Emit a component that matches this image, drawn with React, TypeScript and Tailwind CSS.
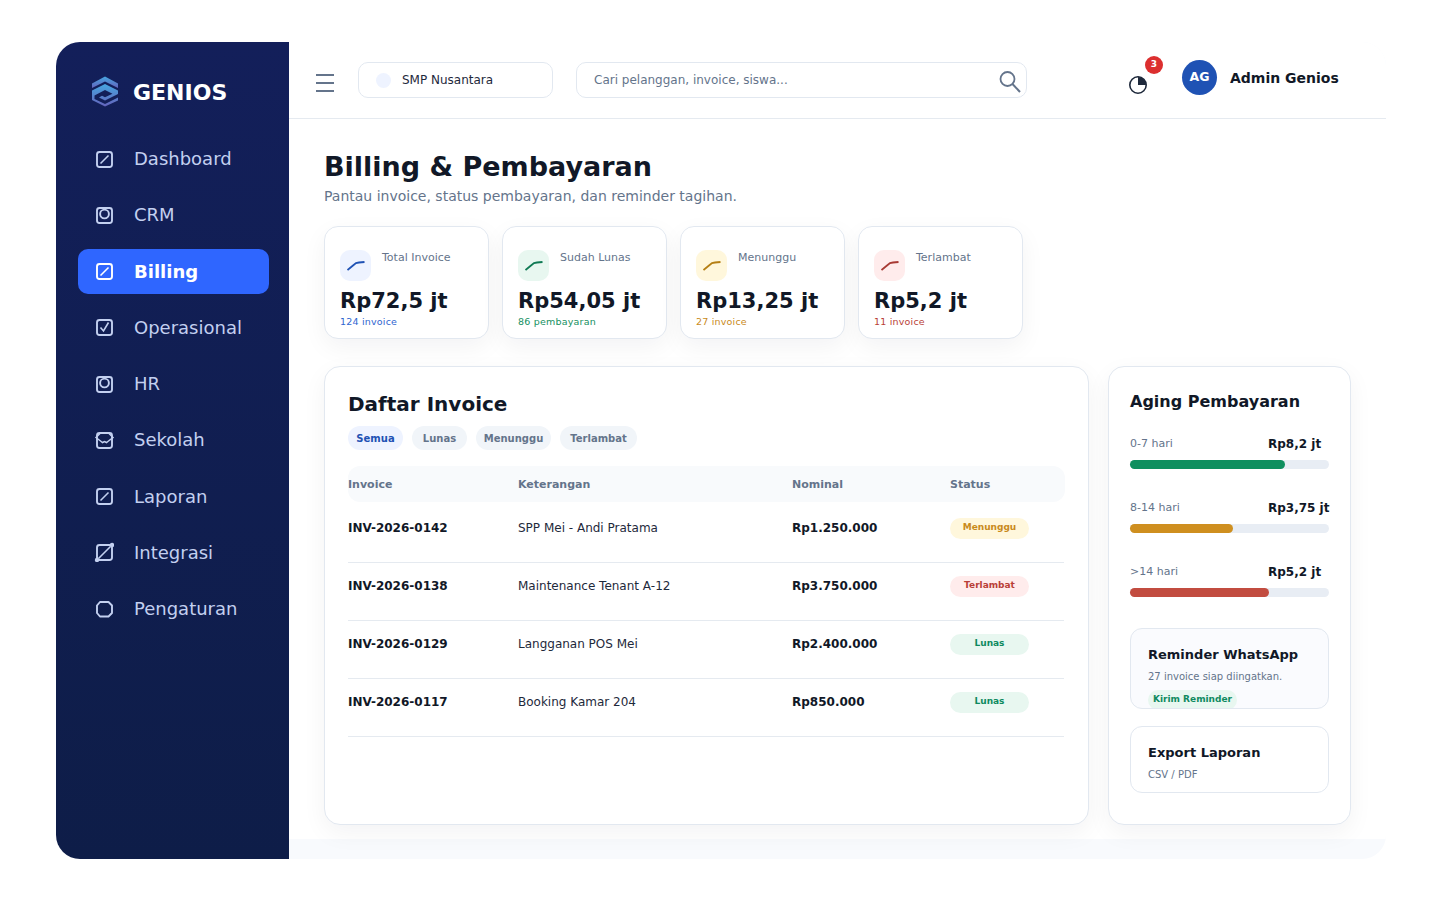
import type { ReactNode } from 'react'

type Tone = { label: string; value: string; sub: string; iconBg: string; stroke: string; subColor: string }

const NAV = [
  { label: 'Dashboard', icon: 'slash' },
  { label: 'CRM', icon: 'circle' },
  { label: 'Billing', icon: 'slash', active: true },
  { label: 'Operasional', icon: 'check' },
  { label: 'HR', icon: 'circle' },
  { label: 'Sekolah', icon: 'eye' },
  { label: 'Laporan', icon: 'slash' },
  { label: 'Integrasi', icon: 'link' },
  { label: 'Pengaturan', icon: 'gear' },
]

const STATS: Tone[] = [
  { label: 'Total Invoice', value: 'Rp72,5 jt', sub: '124 invoice', iconBg: 'bg-[#eef3ff]', stroke: '#1f52b4', subColor: 'text-[#2f66d0]' },
  { label: 'Sudah Lunas', value: 'Rp54,05 jt', sub: '86 pembayaran', iconBg: 'bg-[#e8f7f0]', stroke: '#0f7a54', subColor: 'text-[#14905f]' },
  { label: 'Menunggu', value: 'Rp13,25 jt', sub: '27 invoice', iconBg: 'bg-[#fff7dc]', stroke: '#b57f14', subColor: 'text-[#c98a1b]' },
  { label: 'Terlambat', value: 'Rp5,2 jt', sub: '11 invoice', iconBg: 'bg-[#ffecec]', stroke: '#a83a34', subColor: 'text-[#b93f38]' },
]

const ROWS = [
  { id: 'INV-2026-0142', desc: 'SPP Mei - Andi Pratama', amount: 'Rp1.250.000', status: 'Menunggu' },
  { id: 'INV-2026-0138', desc: 'Maintenance Tenant A-12', amount: 'Rp3.750.000', status: 'Terlambat' },
  { id: 'INV-2026-0129', desc: 'Langganan POS Mei', amount: 'Rp2.400.000', status: 'Lunas' },
  { id: 'INV-2026-0117', desc: 'Booking Kamar 204', amount: 'Rp850.000', status: 'Lunas' },
]

const STATUS_STYLE: Record<string, string> = {
  Menunggu: 'bg-[#fff7dc] text-[#c98a1b]',
  Terlambat: 'bg-[#ffecec] text-[#b93f38]',
  Lunas: 'bg-[#e8f7f0] text-[#0f8a5f]',
}

const AGING = [
  { label: '0-7 hari', value: 'Rp8,2 jt', width: '78%', color: 'bg-[#0f8f5f]' },
  { label: '8-14 hari', value: 'Rp3,75 jt', width: '52%', color: 'bg-[#cf8f1f]' },
  { label: '>14 hari', value: 'Rp5,2 jt', width: '70%', color: 'bg-[#c24c40]' },
]

function NavIcon({ kind }: { kind: string }) {
  return (
    <svg width="20" height="20" viewBox="0 0 20 20" fill="none" stroke="currentColor" strokeWidth="1.9" className="shrink-0">
      {kind === 'gear' ? (
        <path d="M6 3h8.5L18 6.5V14l-3.5 3.500H6L3 14V6.5z" strokeLinejoin="round" />
      ) : (
        <rect x="3" y="3" width="15" height="15" rx="2.5" />
      )}
      {kind === 'slash' && <path d="M6.5 14.5 14.5 6.5" strokeWidth="1.6" />}
      {kind === 'circle' && <circle cx="10.5" cy="9" r="4.4" />}
      {kind === 'check' && <path d="m6.5 10.500 3 3.500 5-8.500" strokeWidth="1.6" />}
      {kind === 'eye' && <path d="M2 7.500 6.500 3h8L19 7.500 14.500 11l-2 1.500-2-1-2 1-2-1.500z" strokeWidth="1.5" />}
      {kind === 'link' && (
        <>
          <path d="M4.5 16.500 16.500 4.500" strokeWidth="1.6" />
          <circle cx="3" cy="18" r="2.2" fill="currentColor" stroke="none" />
          <circle cx="18" cy="3" r="2.2" fill="currentColor" stroke="none" />
        </>
      )}
    </svg>
  )
}

function Card({ className, children }: { className: string; children: ReactNode }) {
  return (
    <div className={`bg-white border border-[#e2e8f0] shadow-[0_8px_24px_rgba(15,23,42,0.05)] ${className}`}>
      {children}
    </div>
  )
}

export default function App() {
  return (
    <div className="h-[900px] bg-white pt-[42px] pl-[56px] [font-family:'DejaVu_Sans',sans-serif]">
      <div className="flex h-[817px] w-[1330px] overflow-hidden rounded-[24px]">
        {/* Sidebar */}
        <aside className="w-[233px] shrink-0 bg-gradient-to-b from-[#131f5a] to-[#0e1d48] pl-[22px] pt-[34px]">
          <div className="flex h-[30px] items-center pl-[13px] pt-[1px]">
            <svg width="28" height="31" viewBox="0 0 28 31" fill="none">
              <defs>
                <linearGradient id="logo" x1="0" y1="0" x2="0" y2="1">
                  <stop offset="0" stopColor="#46a6e0" />
                  <stop offset="1" stopColor="#6463bc" />
                </linearGradient>
              </defs>
              <path d="M14 0.5 27 7.5v4.500L14 5.500 1 12V7.5z" fill="url(#logo)" />
              <path d="M14 8 27 14.500v3.500L14 24.500l-6-3 3-1.700 3 1.500 7.500-3.600L14 14 3.500 19.500v3.500L14 28l13-6.500v3L14 30.500 1 24V14.500z" fill="url(#logo)" />
            </svg>
            <span className="ml-[14px] mt-[3px] text-[22px] font-bold leading-none text-white">GENIOS</span>
          </div>
          <nav className="mt-[30px] flex w-[191px] flex-col">
            {NAV.map(item => (
              <a
                key={item.label}
                className={`mb-[11.25px] flex h-[45px] items-center rounded-[10px] pl-[16px] text-[18px] ${
                  item.active ? 'bg-[#2f66ff] font-bold text-white' : 'text-[#c3d0f0]'
                }`}
              >
                <NavIcon kind={item.icon} />
                <span className="ml-[20px]">{item.label}</span>
              </a>
            ))}
          </nav>
        </aside>

        {/* Main */}
        <main className="flex min-w-0 flex-1 flex-col bg-[#f8fafd]">
          <div className="relative z-10 flex-1 bg-white">
            <header className="flex h-[77px] items-center border-b border-[#e5eaf0] pl-[27px]">
              <div className="mt-[6px] flex w-[18px] flex-col gap-[5.5px]">
                <span className="h-[2.5px] bg-[#64748b]" />
                <span className="h-[2.5px] bg-[#64748b]" />
                <span className="h-[2.5px] bg-[#64748b]" />
              </div>
              <div className="ml-[24px] flex h-[36px] w-[195px] items-center rounded-[10px] border border-[#e2e8f0] pl-[17px]">
                <span className="h-[15px] w-[15px] rounded-full bg-[#eef3ff]" />
                <span className="ml-[11px] text-[12px] text-[#1e293b]">SMP Nusantara</span>
              </div>
              <div className="ml-[23px] flex h-[36px] w-[451px] items-center justify-between rounded-[10px] border border-[#e2e8f0] pl-[17px] pr-[4px]">
                <span className="text-[12px] text-[#64748b]">Cari pelanggan, invoice, siswa...</span>
                <svg width="24" height="24" viewBox="0 0 24 24" fill="none" stroke="#64748b" className="mt-[4px]">
                  <circle cx="9.5" cy="9" r="7" strokeWidth="1.8" />
                  <path d="m14.5 14 7.500 8" strokeWidth="2" />
                </svg>
              </div>
              <div className="relative ml-[101px] mt-[10px] h-[20px] w-[20px]">
                <svg width="20" height="20" viewBox="0 0 20 20">
                  <circle cx="10" cy="10" r="8.2" fill="none" stroke="#1e293b" strokeWidth="1.6" />
                  <path d="M10 10V2a8 8 0 0 1 8 8z" fill="#1e293b" />
                </svg>
                <span className="absolute left-[17px] top-[-19px] flex h-[18px] w-[18px] items-center justify-center rounded-full bg-[#dc2f2f] text-[9px] font-bold text-white">
                  3
                </span>
              </div>
              <div className="ml-[34px] mb-[5px] flex h-[35px] w-[35px] items-center justify-center rounded-full bg-[#1f52b4] text-[12.5px] font-bold text-white">
                AG
              </div>
              <span className="ml-[13px] mb-[4px] text-[14px] font-bold text-[#111827]">Admin Genios</span>
            </header>

            <div className="pl-[35px] pt-[30px]">
              <h1 className="text-[27px] font-bold leading-[36px] text-[#111827]">Billing &amp; Pembayaran</h1>
              <p className="mt-[1px] text-[14px] leading-[20px] text-[#64748b]">
                Pantau invoice, status pembayaran, dan reminder tagihan.
              </p>

              {/* Stat cards */}
              <div className="mt-[20px] flex gap-[13px]">
                {STATS.map(s => (
                  <Card key={s.label} className="h-[113px] w-[165px] rounded-[14px] px-[15px] pt-[23px]">
                    <div className="flex items-start">
                      <div className={`flex h-[31px] w-[31px] items-center justify-center rounded-[10px] ${s.iconBg}`}>
                        <svg width="18" height="10" viewBox="0 0 18 10" fill="none" stroke={s.stroke} strokeWidth="1.8">
                          <path d="M0.5 9 6 4.5 9 2l3-.5 5.500-.5" />
                        </svg>
                      </div>
                      <span className="ml-[11px] mt-[1px] text-[11px] leading-[14px] text-[#64748b]">{s.label}</span>
                    </div>
                    <div className="mt-[6px] text-[21px] font-bold leading-[28px] text-[#111827]">{s.value}</div>
                    <div className={`text-[9.5px] leading-[14px] tracking-[0.2px] ${s.subColor}`}>{s.sub}</div>
                  </Card>
                ))}
              </div>

              <div className="mt-[27px] flex gap-[19px]">
                {/* Invoice table */}
                <Card className="h-[459px] w-[765px] rounded-[16px] px-[23px] pt-[24px]">
                  <h2 className="text-[20px] font-bold leading-[26px] text-[#111827]">Daftar Invoice</h2>
                  <div className="mt-[9px] flex gap-[9px] text-[10px] font-bold">
                    <span className="flex h-[24px] w-[55px] items-center justify-center rounded-full bg-[#eef3ff] text-[#1f52b4]">Semua</span>
                    <span className="flex h-[24px] w-[55px] items-center justify-center rounded-full bg-[#f1f5f9] text-[#64748b]">Lunas</span>
                    <span className="flex h-[24px] w-[75px] items-center justify-center rounded-full bg-[#f1f5f9] text-[#64748b]">Menunggu</span>
                    <span className="flex h-[24px] w-[77px] items-center justify-center rounded-full bg-[#f1f5f9] text-[#64748b]">Terlambat</span>
                  </div>
                  <div className="mt-[16px] flex h-[36px] w-[717px] items-center rounded-[12px] bg-[#f8fafc] pt-[2px] text-[11px] font-bold text-[#64748b]">
                    <span className="w-[170px]">Invoice</span>
                    <span className="w-[274px]">Keterangan</span>
                    <span className="w-[158px]">Nominal</span>
                    <span>Status</span>
                  </div>
                  {ROWS.map((r, i) => (
                    <div
                      key={r.id}
                      className={`flex w-[716px] items-center border-b border-[#e5eaf0] text-[12px] ${i === 0 ? 'h-[61px] pb-[8px]' : 'h-[58px] pb-[11px]'}`}
                    >
                      <span className="w-[170px] font-bold text-[#111827]">{r.id}</span>
                      <span className="w-[274px] text-[#1e293b]">{r.desc}</span>
                      <span className="w-[158px] font-bold text-[#111827]">{r.amount}</span>
                      <span className={`flex h-[21px] w-[79px] items-center justify-center rounded-full text-[9px] font-bold ${STATUS_STYLE[r.status]}`}>
                        {r.status}
                      </span>
                    </div>
                  ))}
                </Card>

                {/* Aging */}
                <Card className="h-[459px] w-[243px] rounded-[16px] px-[21px] pt-[24px]">
                  <h2 className="text-[16px] font-bold leading-[22px] text-[#111827]">Aging Pembayaran</h2>
                  <div className="mt-[23px] flex w-[199px] flex-col gap-[31px]">
                    {AGING.map(a => (
                      <div key={a.label}>
                        <div className="flex h-[16px] items-center">
                          <span className="w-[138px] shrink-0 text-[11px] text-[#64748b]">{a.label}</span>
                          <span className="whitespace-nowrap text-[12px] font-bold text-[#111827]">{a.value}</span>
                        </div>
                        <div className="mt-[8px] h-[9px] rounded-full bg-[#e8edf4]">
                          <div className={`h-full rounded-full ${a.color}`} style={{ width: a.width }} />
                        </div>
                      </div>
                    ))}
                  </div>
                  <div className="mt-[31px] h-[81px] w-[199px] overflow-hidden rounded-[12px] border border-[#e2e8f0] bg-[#fafbfe] pl-[17px] pt-[17px]">
                    <div className="text-[13px] font-bold leading-[18px] text-[#111827]">Reminder WhatsApp</div>
                    <div className="mt-[6px] text-[10px] leading-[14px] text-[#64748b]">27 invoice siap diingatkan.</div>
                    <div className="mt-[6px] flex h-[20px] w-[89px] items-center justify-center rounded-full bg-[#e8f7f0] text-[9px] font-bold text-[#0f8a5f]">
                      Kirim Reminder
                    </div>
                  </div>
                  <div className="mt-[17px] h-[67px] w-[199px] rounded-[12px] border border-[#e2e8f0] pl-[17px] pt-[17px]">
                    <div className="text-[13px] font-bold leading-[18px] text-[#111827]">Export Laporan</div>
                    <div className="mt-[6px] text-[10px] leading-[14px] text-[#64748b]">CSV / PDF</div>
                  </div>
                </Card>
              </div>
            </div>
          </div>
          <div className="h-[20px] shrink-0" />
        </main>
      </div>
    </div>
  )
}
